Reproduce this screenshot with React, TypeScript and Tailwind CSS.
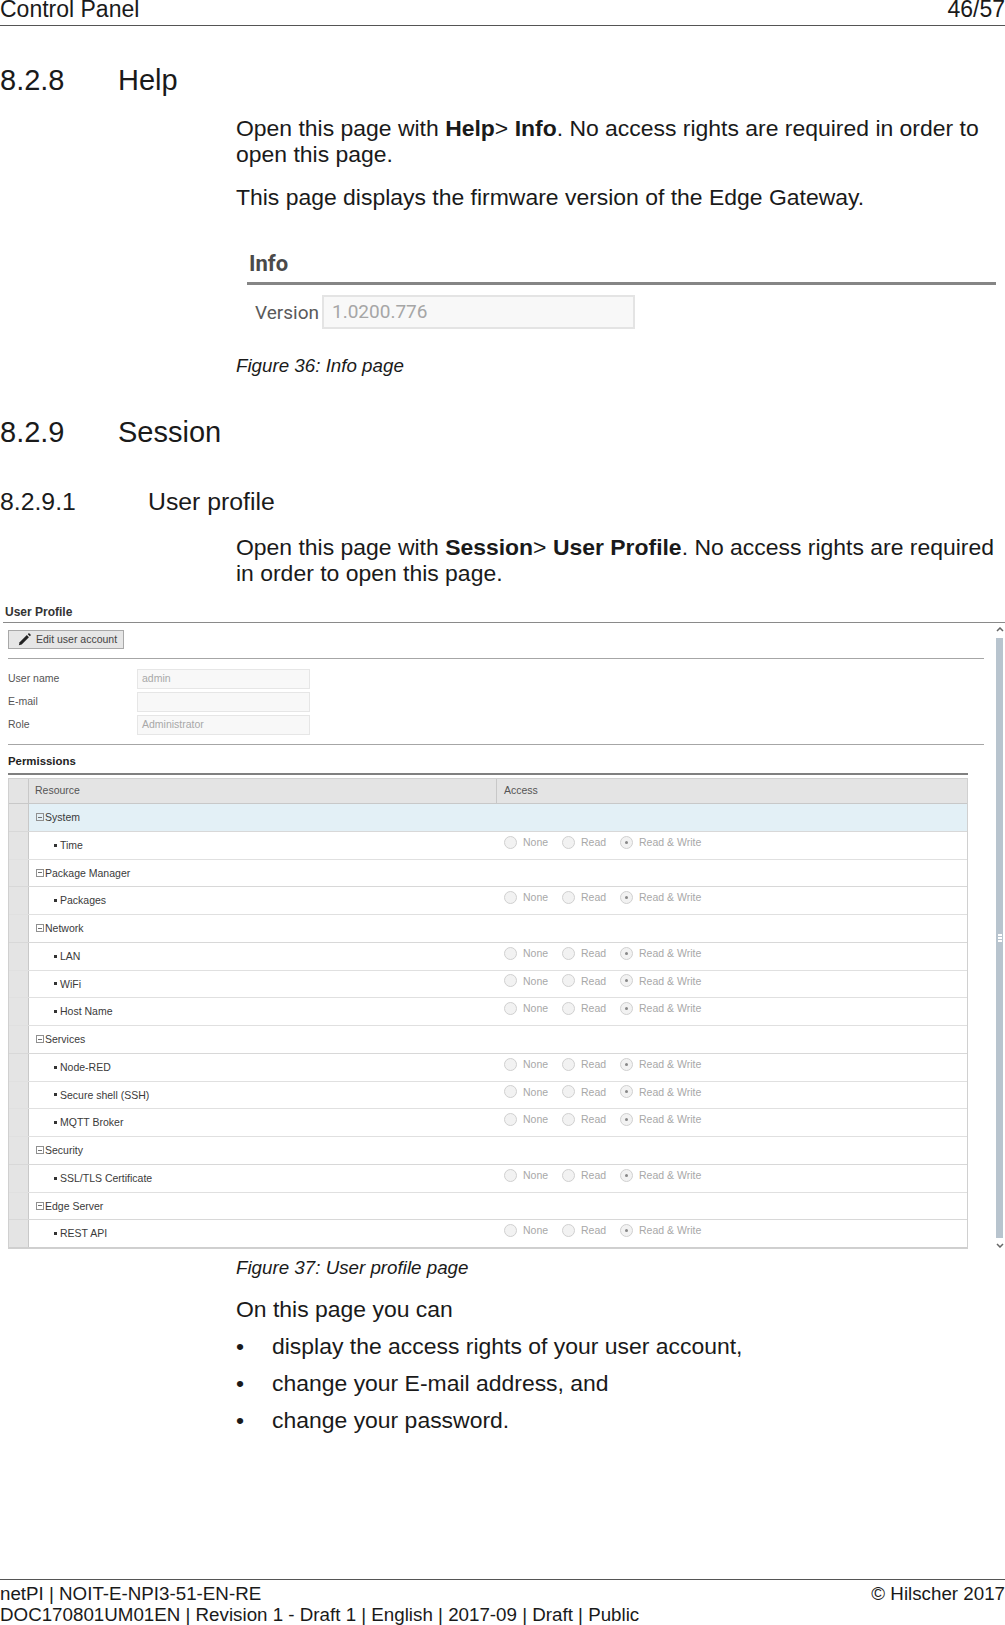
import React from "react";

const resources = [
  { name: "System", group: true, selected: true },
  { name: "Time" },
  { name: "Package Manager", group: true },
  { name: "Packages" },
  { name: "Network", group: true },
  { name: "LAN" },
  { name: "WiFi" },
  { name: "Host Name" },
  { name: "Services", group: true },
  { name: "Node-RED" },
  { name: "Secure shell (SSH)" },
  { name: "MQTT Broker" },
  { name: "Security", group: true },
  { name: "SSL/TLS Certificate" },
  { name: "Edge Server", group: true },
  { name: "REST API" },
];

const Radio = ({ checked, label, width }: { checked?: boolean; label: string; width: string }) => (
  <div className={`flex items-center gap-[6px] ${width}`}>
    <span className="flex h-[13px] w-[13px] shrink-0 items-center justify-center rounded-full border border-[#d0d0d0] bg-[#f2f2f2]">
      {checked && <span className="h-[3px] w-[3px] rounded-full bg-[#888888]" />}
    </span>
    <span className="text-[10.5px] leading-none text-[#a8a8a8]">{label}</span>
  </div>
);

const Row = ({ item, last }: { item: (typeof resources)[number]; last: boolean }) => (
  <div className={`flex h-[27.75px] border-b ${last ? "border-[#cfcfcf]" : item.group ? "border-[#d8d8d8]" : "border-[#e0e0e0]"}`}>
    <div className="w-[20px] shrink-0 border-r border-[#c8c8c8] bg-[#e4e4e4]" />
    <div className={`flex flex-1 items-center ${item.selected ? "bg-[#e3f0f6]" : "bg-white"}`}>
      <div className="w-[468px] shrink-0 text-[10.5px] leading-none text-[#3a3a3a]">
        {item.group ? (
          <div className="flex items-center pl-[7px]">
            <span className="mr-[1px] flex h-[8px] w-[8px] items-center justify-center border border-[#909090]">
              <span className="h-px w-[4px] bg-[#707070]" />
            </span>
            {item.name}
          </div>
        ) : (
          <div className="flex items-center pl-[25px]">
            <span className="mr-[3px] h-[3px] w-[3px] bg-[#333333]" />
            {item.name}
          </div>
        )}
      </div>
      {!item.group && (
        <div className="-mt-[6px] ml-[7px] flex items-center">
          <Radio label="None" width="w-[58px]" />
          <Radio label="Read" width="w-[58px]" />
          <Radio label="Read & Write" checked width="w-[90px]" />
        </div>
      )}
    </div>
  </div>
);

const Field = ({ label, value }: { label: string; value: string }) => (
  <div className="flex h-[20px] items-center">
    <div className="w-[129px] text-[10.5px] text-[#555555]">{label}</div>
    <div className="flex h-[20px] w-[173px] items-center border border-[#e6e6e6] bg-[#f8f8f8] pl-[4px] text-[10.5px] text-[#a8a8a8]">
      {value}
    </div>
  </div>
);

const Para = ({ children, className = "" }: { children: React.ReactNode; className?: string }) => (
  <p className={`ml-[236px] text-[22.95px] text-[#1a1a1a] ${className}`}>{children}</p>
);

const Bullet = ({ children }: { children: React.ReactNode }) => (
  <div className="ml-[236px] flex h-[37px] items-center text-[22.95px] text-[#1a1a1a]">
    <span className="w-[36px]">•</span>
    {children}
  </div>
);

export default function App() {
  return (
    <div className="flex h-[1625px] w-[1005px] flex-col overflow-hidden bg-white font-['Liberation_Sans',sans-serif] text-[#1a1a1a]">
      {/* page header */}
      <header className="flex h-[26px] shrink-0 items-end justify-between border-b border-[#555555] pb-[7px] text-[23px] leading-[18px]">
        <span>Control Panel</span>
        <span>46/57</span>
      </header>

      {/* 8.2.8 */}
      <h2 className="mt-[36px] flex text-[29px] leading-[36px]">
        <span className="w-[118px]">8.2.8</span>Help
      </h2>
      <Para className="mt-[17px] leading-[26px]">
        Open this page with <b>Help</b>&gt; <b>Info</b>. No access rights are required in order to
        open this page.
      </Para>
      <Para className="mt-[16px] leading-[28px]">This page displays the firmware version of the Edge Gateway.</Para>

      <div className="ml-[247px] mt-[37px] w-[749px]">
        <div className="h-[34px] pl-[2px] font-['Roboto',sans-serif] text-[22px] font-bold leading-[32px] text-[#4a4a4a]">Info</div>
        <div className="h-[3px] bg-[#858585]" />
        <div className="mt-[10px] flex items-center">
          <span className="ml-[8px] w-[67px] font-['Roboto',sans-serif] text-[19px] leading-none text-[#5a5a5a]">Version</span>
          <div className="flex h-[34px] w-[313px] items-center border-2 border-[#e4e4e4] bg-[#f8f8f8] pl-[8px] font-['Roboto',sans-serif] text-[19px] text-[#a6a6a6]">
            1.0200.776
          </div>
        </div>
      </div>

      <p className="ml-[236px] mt-[24px] text-[18.75px] italic leading-[26px]">Figure 36: Info page</p>

      {/* 8.2.9 */}
      <h2 className="mt-[35px] flex text-[29px] leading-[36px]">
        <span className="w-[118px]">8.2.9</span>Session
      </h2>
      <h3 className="mt-[37px] flex text-[24.8px] leading-[30px]">
        <span className="w-[148px]">8.2.9.1</span>User profile
      </h3>
      <Para className="mt-[17px] leading-[26px]">
        Open this page with <b>Session</b>&gt; <b>User Profile</b>. No access rights are required
        in order to open this page.
      </Para>

      {/* user profile screenshot */}
      <div className="mt-[16px] shrink-0">
        <div className="ml-[5px] text-[12px] font-bold leading-[20px] text-[#333333]">User Profile</div>
        <div className="ml-[3px] h-px bg-[#8a8a8a]" />
        <div className="flex">
          <div className="ml-[8px] w-[976px]">
            <div className="mt-[7px] flex h-[19px] w-[116px] items-center border border-[#a8a8a8] bg-[#e6e6e6] pl-[8px] text-[10.5px] text-[#444444]">
              <svg viewBox="0 0 16 16" className="mr-[4px] h-[15px] w-[15px] text-[#222222]" fill="currentColor">
                <path d="M2 14l.8-3 7.700-7.700 2.200 2.200-7.700 7.700-3 .8z" />
                <path d="M11.500 2.300l1.200-1.200 2.200 2.200-1.200 1.200z" />
              </svg>
              Edit user account
            </div>
            <div className="mt-[9px] h-px bg-[#a6a6a6]" />
            <div className="mt-[10px] flex flex-col gap-[3px]">
              <Field label="User name" value="admin" />
              <Field label="E-mail" value="" />
              <Field label="Role" value="Administrator" />
            </div>
            <div className="mt-[9px] h-px bg-[#a6a6a6]" />

            <div className="w-[960px]">
              <div className="mt-[6px] text-[11.4px] font-bold leading-[20px] text-[#222222]">Permissions</div>
              <div className="mt-[2px] h-[2px] bg-[#808080]" />
              <div className="mt-[3px] border border-[#d0d0d0]">
                <div className="flex h-[25px] border-b border-[#c8c8c8] bg-[#e4e4e4] text-[10.5px] text-[#555555]">
                  <div className="w-[20px] shrink-0 border-r border-[#c8c8c8]" />
                  <div className="flex w-[468px] shrink-0 items-center border-r border-[#c8c8c8] pl-[6px]">Resource</div>
                  <div className="flex flex-1 items-center pl-[7px]">Access</div>
                </div>
                {resources.map((item, i) => (
                  <Row key={item.name} item={item} last={i === resources.length - 1} />
                ))}
              </div>
            </div>
          </div>

          {/* scrollbar */}
          <div className="ml-[12px] flex w-[7px] flex-col pb-[1px] pt-[4px]">
            <svg viewBox="0 0 8 5" className="h-[5px] w-[8px] shrink-0" fill="none" stroke="#666666" strokeWidth="1.500">
              <path d="M1 4l3-3 3 3" />
            </svg>
            <div className="mt-[6px] flex flex-1 items-center justify-center bg-[#b8c4ce]">
              <div className="flex flex-col gap-[1px]">
                <span className="h-[2px] w-[4px] bg-white" />
                <span className="h-[2px] w-[4px] bg-white" />
                <span className="h-[2px] w-[4px] bg-white" />
              </div>
            </div>
            <svg viewBox="0 0 8 5" className="mt-[5px] h-[5px] w-[8px] shrink-0" fill="none" stroke="#666666" strokeWidth="1.500">
              <path d="M1 1l3 3 3-3" />
            </svg>
          </div>
        </div>
      </div>

      <p className="ml-[236px] mt-[6px] text-[18.75px] italic leading-[26px]">Figure 37: User profile page</p>
      <Para className="mt-[13px] leading-[30px]">On this page you can</Para>
      <div className="mt-[4px]">
        <Bullet>display the access rights of your user account,</Bullet>
        <Bullet>change your E-mail address, and</Bullet>
        <Bullet>change your password.</Bullet>
      </div>

      {/* page footer */}
      <footer className="mt-auto h-[46px] shrink-0 border-t border-[#555555] text-[18.75px] leading-[21px]">
        <div className="mt-[3px] flex justify-between">
          <span>netPI | NOIT-E-NPI3-51-EN-RE</span>
          <span>© Hilscher 2017</span>
        </div>
        <div>DOC170801UM01EN | Revision 1 - Draft 1 | English | 2017-09 | Draft | Public</div>
      </footer>
    </div>
  );
}
